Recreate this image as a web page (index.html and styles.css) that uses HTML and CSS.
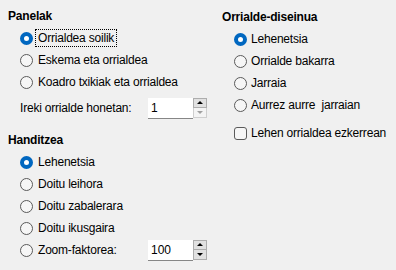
FILE: index.html
```html
<!DOCTYPE html>
<html lang="eu">
<head>
    <meta charset="UTF-8">
    <title>Ikuspegia</title>
    <link rel="stylesheet" href="styles.css">
</head>
<body>
    <div class="dialog">
        <div class="col col-left">
            <div class="group">
                <div class="group-title">Panelak</div>
                <label class="opt"><input type="radio" name="panel" class="radio" checked><span class="focus">Orrialdea soilik</span></label>
                <label class="opt"><input type="radio" name="panel" class="radio">Eskema eta orrialdea</label>
                <label class="opt"><input type="radio" name="panel" class="radio">Koadro txikiak eta orrialdea</label>
                <div class="field field-open">
                    <span class="field-label">Ireki orrialde honetan:</span>
                    <div class="spin">
                        <input type="text" class="spin-input" value="1">
                        <div class="spin-btns">
                            <span class="spin-btn up"></span>
                            <span class="spin-btn down disabled"></span>
                        </div>
                    </div>
                </div>
            </div>
            <div class="group group-zoom">
                <div class="group-title">Handitzea</div>
                <label class="opt"><input type="radio" name="zoom" class="radio" checked>Lehenetsia</label>
                <label class="opt"><input type="radio" name="zoom" class="radio">Doitu leihora</label>
                <label class="opt"><input type="radio" name="zoom" class="radio">Doitu zabalerara</label>
                <label class="opt"><input type="radio" name="zoom" class="radio">Doitu ikusgaira</label>
                <div class="opt field">
                    <input type="radio" name="zoom" class="radio">
                    <span class="field-label zoom-label">Zoom-faktorea:</span>
                    <div class="spin">
                        <input type="text" class="spin-input" value="100">
                        <div class="spin-btns">
                            <span class="spin-btn up"></span>
                            <span class="spin-btn down"></span>
                        </div>
                    </div>
                </div>
            </div>
        </div>
        <div class="col col-right">
            <div class="group">
                <div class="group-title">Orrialde-diseinua</div>
                <label class="opt"><input type="radio" name="layout" class="radio" checked>Lehenetsia</label>
                <label class="opt"><input type="radio" name="layout" class="radio">Orrialde bakarra</label>
                <label class="opt"><input type="radio" name="layout" class="radio">Jarraia</label>
                <label class="opt"><input type="radio" name="layout" class="radio">Aurrez aurre&nbsp; jarraian</label>
                <label class="opt opt-check"><input type="checkbox" class="check">Lehen orrialdea ezkerrean</label>
            </div>
        </div>
    </div>
</body>
</html>
```

FILE: styles.css
```css
body {
    margin: 0;
    background: #f0f0f0;
    font-family: "Liberation Sans", Arial, sans-serif;
    font-size: 12px;
    letter-spacing: -0.2px;
    color: #000;
}

.dialog {
    display: grid;
    grid-template-columns: 214px 1fr;
    padding: 5px 0 0 8px;
}

.col-right {
    padding-top: 1px;
}

.group-title {
    height: 22px;
    line-height: 22px;
    font-weight: bold;
}

.group-zoom {
    margin-top: 7px;
}

.opt {
    display: flex;
    align-items: center;
    height: 22px;
    padding-left: 12px;
    white-space: nowrap;
}

.opt-check {
    margin-top: 6px;
}

/* 单选 / 复选 */
.radio,
.check {
    appearance: none;
    -webkit-appearance: none;
    box-sizing: border-box;
    width: 13px;
    height: 13px;
    margin: 0 5px 0 0;
    border: 1px solid #5a5a5a;
    background: #f6f6f6;
    flex: none;
}

.radio {
    border-radius: 50%;
}

.radio:checked {
    border: 4px solid #0067c0;
    background: #fff;
}

.check {
    border-radius: 3px;
}

.col-right .radio,
.col-right .check {
    margin-right: 4px;
}

.focus {
    outline: 1px dotted #000;
    outline-offset: 1px;
    padding: 0 1px;
    margin-left: -1px;
}

/* 数字输入 */
.field {
    display: flex;
    align-items: center;
    padding-left: 12px;
}

.field-open {
    height: 28px;
    margin-top: 1px;
}

.field-label {
    width: 128px;
    flex: none;
}

.zoom-label {
    width: 110px;
}

.spin {
    display: flex;
    align-items: flex-start;
}

.spin-input {
    box-sizing: border-box;
    width: 45px;
    height: 21px;
    margin: 0;
    padding: 0 0 0 3px;
    border: none;
    border-bottom: 1px solid #868686;
    background: #fff;
    font: inherit;
    color: #000;
    outline: none;
}

.spin-btns {
    display: flex;
    flex-direction: column;
    width: 14px;
    height: 20px;
}

.spin-btn {
    box-sizing: border-box;
    height: 10px;
    border: 1px solid #adadad;
    background: #e1e1e1;
    display: flex;
    align-items: center;
    justify-content: center;
}

.spin-btn + .spin-btn {
    border-top: none;
}

.spin-btn::after {
    content: '';
    width: 0;
    height: 0;
    border-left: 3px solid transparent;
    border-right: 3px solid transparent;
}

.spin-btn.up::after {
    border-bottom: 3px solid #000;
}

.spin-btn.down::after {
    border-top: 3px solid #000;
}

.spin-btn.disabled {
    background: #f4f4f4;
    border-color: #cfcfcf;
}

.spin-btn.disabled::after {
    border-top-color: #a0a0a0;
}
```
